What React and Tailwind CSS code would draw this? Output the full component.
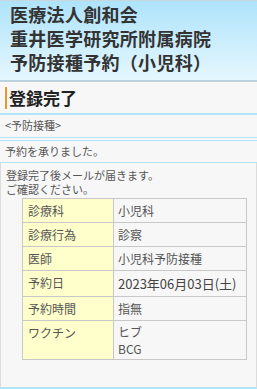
export default function App() {
  const rows = [
    { label: '診療科', value: ['小児科'] },
    { label: '診療行為', value: ['診察'] },
    { label: '医師', value: ['小児科予防接種'] },
    { label: '予約日', value: ['2023年06月03日(土)'], big: true },
    { label: '予約時間', value: ['指無'] },
    { label: 'ワクチン', value: ['ヒブ', 'BCG'], multi: true },
  ];

  const valueClass = (r) => {
    if (r.big) return 'border border-[#c8c8c8] bg-[#f7f7f7] px-[4px] py-[4px] align-top text-[13px] leading-[17px] text-[#444]';
    if (r.multi) return 'border border-[#c8c8c8] bg-[#f7f7f7] px-[4px] py-[2px] align-top leading-[17px] text-[#555]';
    return 'border border-[#c8c8c8] bg-[#f7f7f7] px-[4px] py-[4px] align-top text-[#555]';
  };

  return (
    <div
      className="w-[257px] h-[389px] overflow-hidden bg-[#f7f7f7] text-[#444] flex flex-col"
      style={{ fontFamily: '"Noto Sans CJK JP", "Noto Sans", sans-serif' }}
    >
      <header className="h-[80px] border-t border-[#c8d6de] bg-gradient-to-b from-[#ade3fb] to-[#e6f7fe] pl-[10px] pt-[1px]">
        <h1 className="text-[18px] font-bold leading-[24px] text-[#333] tracking-[0.3px]">
          医療法人創和会
          <br />
          重井医学研究所附属病院
          <br />
          予防接種予約（小児科）
        </h1>
      </header>

      <div className="border-t-2 border-[#bcd3df] border-b-2 border-b-[#b3e4fb] h-[35px] flex items-center pl-[5px]">
        <div className="border-l-2 border-[#e39a2a] pl-[2px] h-[22px] flex items-center">
          <h2 className="text-[17px] font-bold text-[#222] leading-none">登録完了</h2>
        </div>
      </div>

      <div className="border-b border-[#b3e4fb] h-[23px] flex items-center pb-[2px] px-[5px] text-[11px] text-[#555]">
        &lt;予防接種&gt;
      </div>

      <div className="mt-[2px] border-t border-[#b3e4fb] border-b border-b-[#b3e4fb] h-[23px] flex items-center px-[5px] text-[11px] text-[#555]">
        予約を承りました。
      </div>

      <div className="flex-1 border-x border-[#dcdcdc] border-b-2 border-b-[#b3e4fb] px-[5px] pt-[5px] text-[11px] text-[#555]">
        <p className="leading-[14px]">
          登録完了後メールが届きます。
          <br />
          ご確認ください。
        </p>
        <table className="ml-[16px] mt-[2px] w-[225px] border-collapse border border-[#c8c8c8] text-[12px] leading-[15px]">
          <tbody>
            {rows.map((r) => (
              <tr key={r.label}>
                <td className="w-[91px] border border-[#c8c8c8] bg-[#ffffcc] px-[5px] py-[4px] align-top text-[#555]">
                  {r.label}
                </td>
                <td className={valueClass(r)}>
                  {r.value.map((v, i) => (
                    <div key={i}>{v}</div>
                  ))}
                </td>
              </tr>
            ))}
          </tbody>
        </table>
      </div>
    </div>
  );
}
